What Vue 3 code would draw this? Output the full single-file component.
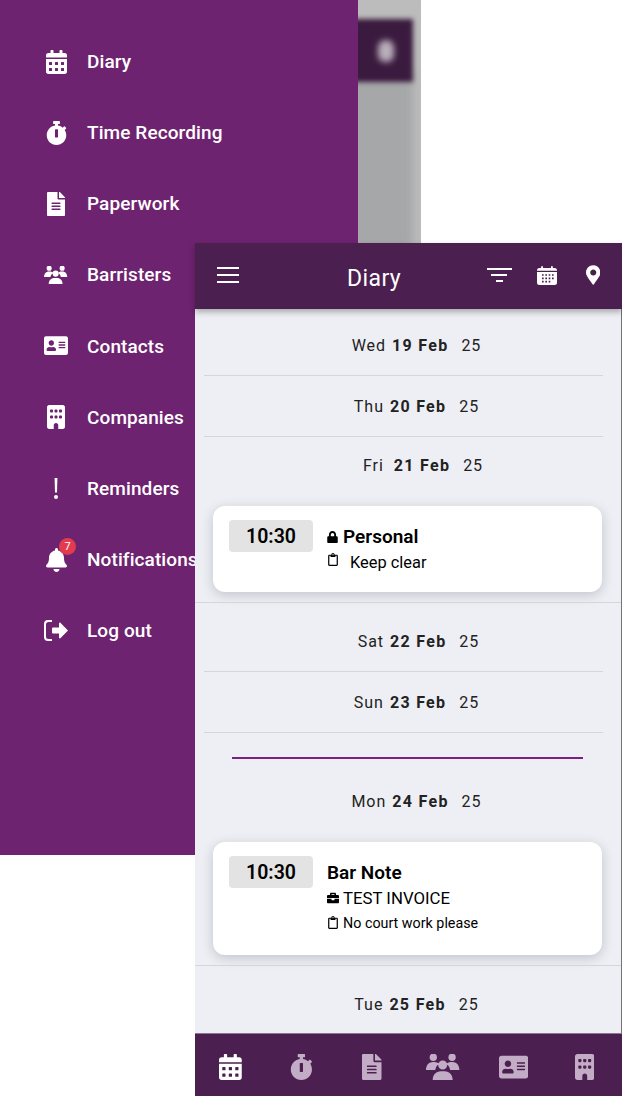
<template>
  <div class="page">
    <!-- back screen, menu open -->
    <div class="back">
      <div class="blur-shot">
        <div class="blur-list"></div>
        <div class="blur-bar"><span class="blur-pin"></span></div>
      </div>
      <nav class="menu">
        <div v-for="item in menu" :key="item.label" class="menu-row">
          <span class="menu-icon">
            <svg :class="'ico-' + item.icon" :viewBox="icons[item.icon].box"><path :d="icons[item.icon].d" /></svg>
            <span v-if="item.badge" class="badge">{{ item.badge }}</span>
          </span>
          <span class="menu-label">{{ item.label }}</span>
        </div>
      </nav>
    </div>

    <!-- front screen -->
    <div class="front">
      <header class="bar">
        <div class="burger"><span></span><span></span><span></span></div>
        <div class="title">Diary</div>
        <div class="actions">
          <div class="filter"><span></span><span></span><span></span></div>
          <svg class="cal-small" viewBox="0 0 24 24">
            <path d="M5 1.500h2.200v2H16.800v-2H19v2h2a3 3 0 0 1 3 3V7H0v-.5a3 3 0 0 1 3-3h2zM0 8.500h24V21a3 3 0 0 1-3 3H3a3 3 0 0 1-3-3zM6 11v2h2v-2zm4 0v2h2v-2zm4 0v2h2v-2zm4 0v2h2v-2zM6 15v2h2v-2zm4 0v2h2v-2zm4 0v2h2v-2zm4 0v2h2v-2zM6 19v2h2v-2zm4 0v2h2v-2zm4 0v2h2v-2z" fill-rule="evenodd" />
          </svg>
          <svg class="pin" :viewBox="icons.marker.box"><path :d="icons.marker.d" /></svg>
        </div>
      </header>

      <main class="list">
        <template v-for="day in days" :key="day.name">
          <div v-if="day.today" class="today"></div>
          <div class="day" :class="[day.shift, { tight: day.entry, after: day.after }]">
            <span>{{ day.name }}&nbsp;</span>
            <b>{{ day.date }}</b>
            <span class="year">&nbsp;&nbsp; 25</span>
          </div>
          <div v-if="day.entry" class="entry">
            <div class="time">{{ day.entry.time }}</div>
            <div class="info">
              <div class="heading">
                <svg v-if="day.entry.private" class="lock" :viewBox="icons.lock.box"><path :d="icons.lock.d" /></svg>
                {{ day.entry.title }}
              </div>
              <div v-if="day.entry.matter" class="matter">
                <svg class="case" :viewBox="icons.briefcase.box"><path :d="icons.briefcase.d" /></svg>
                {{ day.entry.matter }}
              </div>
              <div class="note" :class="{ big: day.entry.private }">
                <svg class="clip" :viewBox="icons.clipboard.box"><path :d="icons.clipboard.d" /></svg>
                <span>{{ day.entry.note }}</span>
              </div>
            </div>
          </div>
          <div v-if="day.entry" class="rule full"></div>
          <div v-else-if="day.rule" class="rule"></div>
        </template>
      </main>

      <footer class="tabs">
        <div v-for="(tab, i) in tabs" :key="tab" class="tab" :class="{ active: i === 0 }">
          <svg :viewBox="icons[tab].box"><path :d="icons[tab].d" /></svg>
        </div>
      </footer>
    </div>
  </div>
</template>

<script setup>
const icons = {
  calendar: { box: '0 0 448 512', d: 'M0 464c0 26.500 21.500 48 48 48h352c26.500 0 48-21.500 48-48V192H0v272zm320-196c0-6.600 5.400-12 12-12h40c6.600 0 12 5.400 12 12v40c0 6.600-5.400 12-12 12h-40c-6.600 0-12-5.400-12-12v-40zm0 128c0-6.600 5.400-12 12-12h40c6.600 0 12 5.400 12 12v40c0 6.600-5.400 12-12 12h-40c-6.600 0-12-5.400-12-12v-40zM192 268c0-6.600 5.400-12 12-12h40c6.600 0 12 5.400 12 12v40c0 6.600-5.400 12-12 12h-40c-6.600 0-12-5.400-12-12v-40zm0 128c0-6.600 5.400-12 12-12h40c6.600 0 12 5.400 12 12v40c0 6.600-5.400 12-12 12h-40c-6.600 0-12-5.400-12-12v-40zM64 268c0-6.600 5.400-12 12-12h40c6.600 0 12 5.400 12 12v40c0 6.600-5.400 12-12 12H76c-6.600 0-12-5.400-12-12v-40zm0 128c0-6.600 5.400-12 12-12h40c6.600 0 12 5.400 12 12v40c0 6.600-5.400 12-12 12H76c-6.600 0-12-5.400-12-12v-40zM400 64h-48V16c0-8.800-7.200-16-16-16h-32c-8.800 0-16 7.200-16 16v48H160V16c0-8.800-7.200-16-16-16h-32c-8.800 0-16 7.200-16 16v48H48C21.500 64 0 85.500 0 112v48h448v-48c0-26.500-21.500-48-48-48z' },
  stopwatch: { box: '0 0 448 512', d: 'M432 304c0 114.900-93.100 208-208 208S16 418.900 16 304c0-104 76.300-190.200 176-205.500V64h-28c-6.600 0-12-5.400-12-12V12c0-6.600 5.400-12 12-12h120c6.600 0 12 5.400 12 12v40c0 6.600-5.400 12-12 12h-28v34.500c37.500 5.800 71.700 21.600 99.700 44.600l27.500-27.500c4.700-4.700 12.300-4.700 17 0l28.300 28.300c4.700 4.700 4.700 12.300 0 17l-29.400 29.400-.6.6C419.700 223.300 432 262.200 432 304zm-176 36V188.500c0-6.600-5.400-12-12-12h-40c-6.600 0-12 5.400-12 12V340c0 6.600 5.400 12 12 12h40c6.600 0 12-5.400 12-12z' },
  file: { box: '0 0 384 512', d: 'M224 136V0H24C10.700 0 0 10.700 0 24v464c0 13.300 10.700 24 24 24h336c13.300 0 24-10.700 24-24V160H248c-13.200 0-24-10.800-24-24zm64 236c0 6.600-5.400 12-12 12H108c-6.600 0-12-5.400-12-12v-8c0-6.600 5.400-12 12-12h168c6.600 0 12 5.400 12 12v8zm0-64c0 6.600-5.400 12-12 12H108c-6.600 0-12-5.400-12-12v-8c0-6.600 5.400-12 12-12h168c6.600 0 12 5.400 12 12v8zm0-72v8c0 6.600-5.400 12-12 12H108c-6.600 0-12-5.400-12-12v-8c0-6.600 5.400-12 12-12h168c6.600 0 12 5.400 12 12zm96-114.100v6.100H256V0h6.100c6.400 0 12.500 2.500 17 7l97.900 98c4.500 4.500 7 10.600 7 16.900z' },
  users: { box: '0 0 33.400 26', d: 'M7.300-.4a3.700 3.700 0 1 1 0 7.400 3.700 3.700 0 0 1 0-7.400zM26.100-.4a3.700 3.700 0 1 1 0 7.400 3.700 3.700 0 0 1 0-7.400zM16.700 6.500a4.500 4.500 0 1 1 0 9 4.500 4.500 0 0 1 0-9zM0 16C0 11 3 8 7 8h1.500c2 0 3.500.8 4.500 2-2 1-3.500 3.500-3.700 6zM33.400 16c0-5-3-8-7-8h-1.500c-2 0-3.500.8-4.500 2 2 1 3.500 3.500 3.700 6zM6.700 26c0-5 3.300-8.700 8-8.700h4c4.700 0 8 3.700 8 8.700z' },
  card: { box: '0 0 576 512', d: 'M528 32H48C21.500 32 0 53.500 0 80v352c0 26.500 21.500 48 48 48h480c26.500 0 48-21.500 48-48V80c0-26.500-21.500-48-48-48zm-352 96c35.300 0 64 28.700 64 64s-28.700 64-64 64-64-28.700-64-64 28.700-64 64-64zm112 236.800c0 10.600-10 19.200-22.400 19.200H86.400C74 384 64 375.400 64 364.800v-19.200c0-31.800 30.100-57.600 67.200-57.600h5c12.300 5.100 25.700 8 39.800 8s27.600-2.900 39.800-8h5c37.100 0 67.200 25.800 67.200 57.600v19.200zM512 312c0 4.400-3.600 8-8 8H360c-4.400 0-8-3.600-8-8v-16c0-4.400 3.600-8 8-8h144c4.400 0 8 3.600 8 8v16zm0-64c0 4.400-3.600 8-8 8H360c-4.400 0-8-3.600-8-8v-16c0-4.400 3.600-8 8-8h144c4.400 0 8 3.600 8 8v16zm0-64c0 4.400-3.600 8-8 8H360c-4.400 0-8-3.600-8-8v-16c0-4.400 3.600-8 8-8h144c4.400 0 8 3.600 8 8v16z' },
  building: { box: '0 0 384 512', d: 'M48 0C21.500 0 0 21.500 0 48V464c0 26.500 21.500 48 48 48h96V432c0-26.500 21.500-48 48-48s48 21.500 48 48v80h96c26.500 0 48-21.500 48-48V48c0-26.500-21.500-48-48-48H48zM64 240c0-8.800 7.200-16 16-16h32c8.800 0 16 7.200 16 16v32c0 8.800-7.200 16-16 16H80c-8.800 0-16-7.200-16-16V240zm112-16h32c8.800 0 16 7.200 16 16v32c0 8.800-7.200 16-16 16H176c-8.800 0-16-7.200-16-16V240c0-8.800 7.200-16 16-16zm80 16c0-8.800 7.200-16 16-16h32c8.800 0 16 7.200 16 16v32c0 8.800-7.200 16-16 16H272c-8.800 0-16-7.200-16-16V240zM80 96h32c8.800 0 16 7.200 16 16v32c0 8.800-7.200 16-16 16H80c-8.800 0-16-7.200-16-16V112c0-8.800 7.200-16 16-16zm80 16c0-8.800 7.200-16 16-16h32c8.800 0 16 7.200 16 16v32c0 8.800-7.200 16-16 16H176c-8.800 0-16-7.200-16-16V112zM272 96h32c8.800 0 16 7.200 16 16v32c0 8.800-7.200 16-16 16H272c-8.800 0-16-7.200-16-16V112c0-8.800 7.200-16 16-16z' },
  exclamation: { box: '0 0 4 21', d: 'M.6 0h2.800L3 14.500H1zM2 17a2 2 0 1 1 0 4 2 2 0 0 1 0-4z' },
  bell: { box: '0 0 448 512', d: 'M224 512c35.320 0 63.970-28.650 63.970-64H160.030c0 35.350 28.650 64 63.970 64zm215.390-149.710c-19.320-20.760-55.470-51.990-55.470-154.290 0-77.700-54.480-139.900-127.940-155.160V32c0-17.670-14.320-32-31.980-32s-31.980 14.330-31.980 32v20.840C118.560 68.100 64.080 130.300 64.080 208c0 102.300-36.150 133.530-55.470 154.290-6 6.450-8.660 14.160-8.610 21.710.11 16.400 12.980 32 32.100 32h383.800c19.120 0 32-15.600 32.100-32 .05-7.550-2.610-15.270-8.610-21.710z' },
  logout: { box: '0 0 24 21', d: 'M8 0H4a4 4 0 0 0-4 4v13a4 4 0 0 0 4 4h4v-2H4.500A2.500 2.500 0 0 1 2 16.500V4.500A2.500 2.500 0 0 1 4.500 2H8zM9 7.500h6v-4c0-.8 1-1.200 1.600-.6L24 10.500l-7.400 7.600c-.6.6-1.600.2-1.600-.6v-4H9a1 1 0 0 1-1-1v-4a1 1 0 0 1 1-1z' },
  marker: { box: '0 0 384 512', d: 'M172.268 501.670C26.970 291.031 0 262.454 0 192 0 85.961 85.961 0 192 0s192 85.961 192 192c0 70.454-26.970 99.031-172.268 309.670-9.535 13.774-29.930 13.773-39.464 0zM192 272c44.183 0 80-35.817 80-80s-35.817-80-80-80-80 35.817-80 80 35.817 80 80 80z' },
  lock: { box: '0 0 448 512', d: 'M400 224h-24v-72C376 68.200 307.800 0 224 0S72 68.200 72 152v72H48c-26.500 0-48 21.500-48 48v192c0 26.500 21.500 48 48 48h352c26.500 0 48-21.500 48-48V272c0-26.500-21.500-48-48-48zm-104 0H152v-72c0-39.700 32.300-72 72-72s72 32.300 72 72v72z' },
  briefcase: { box: '0 0 512 512', d: 'M320 336c0 8.840-7.160 16-16 16h-96c-8.840 0-16-7.160-16-16v-48H0v144c0 25.600 22.400 48 48 48h416c25.600 0 48-22.400 48-48V288H320v48zm144-208h-80V80c0-25.600-22.400-48-48-48H176c-25.600 0-48 22.400-48 48v48H48c-25.600 0-48 22.400-48 48v80h512v-80c0-25.600-22.400-48-48-48zm-144 0H192V96h128v32z' },
  clipboard: { box: '0 0 384 512', d: 'M336 64h-80c0-35.300-28.700-64-64-64s-64 28.700-64 64H48C21.500 64 0 85.500 0 112v352c0 26.500 21.500 48 48 48h288c26.500 0 48-21.500 48-48V112c0-26.500-21.500-48-48-48zM192 40c13.300 0 24 10.700 24 24s-10.700 24-24 24-24-10.700-24-24 10.700-24 24-24zm144 418c0 3.300-2.700 6-6 6H54c-3.300 0-6-2.700-6-6V118c0-3.300 2.700-6 6-6h42v36c0 6.600 5.400 12 12 12h168c6.600 0 12-5.400 12-12v-36h42c3.300 0 6 2.700 6 6z' },
}

const menu = [
  { label: 'Diary', icon: 'calendar' },
  { label: 'Time Recording', icon: 'stopwatch' },
  { label: 'Paperwork', icon: 'file' },
  { label: 'Barristers', icon: 'users' },
  { label: 'Contacts', icon: 'card' },
  { label: 'Companies', icon: 'building' },
  { label: 'Reminders', icon: 'exclamation' },
  { label: 'Notifications', icon: 'bell', badge: 7 },
  { label: 'Log out', icon: 'logout' },
]

const days = [
  { name: 'Wed', date: '19 Feb', rule: true },
  { name: 'Thu', date: '20 Feb', rule: true },
  { name: 'Fri', date: '21 Feb', shift: 'fri', entry: { time: '10:30', title: 'Personal', private: true, note: 'Keep clear' } },
  { name: 'Sat', date: '22 Feb', shift: 'sat', rule: true, after: true },
  { name: 'Sun', date: '23 Feb', rule: true },
  { name: 'Mon', date: '24 Feb', today: true, entry: { time: '10:30', title: 'Bar Note', matter: 'TEST INVOICE', note: 'No court work please' } },
  { name: 'Tue', date: '25 Feb', after: true },
]

const tabs = ['calendar', 'stopwatch', 'file', 'users', 'card', 'building']
</script>

<style>
html, body {
  margin: 0;
  background: #fff;
}
</style>

<style scoped>
.page {
  position: relative;
  width: 622px;
  height: 1096px;
  overflow: hidden;
  background: #fff;
  font-family: Roboto, "Liberation Sans", sans-serif;
}

svg {
  display: block;
  fill: currentColor;
}

.back {
  position: absolute;
  left: 0;
  top: 0;
  width: 421px;
  height: 855px;
}

.blur-shot {
  position: absolute;
  left: 0;
  top: 0;
  width: 421px;
  height: 300px;
  overflow: hidden;
  background: #bcbcbc;
}

.blur-list {
  position: absolute;
  left: 300px;
  top: 70px;
  width: 113px;
  height: 240px;
  background: #a6a7a9;
  filter: blur(4px);
}

.blur-bar {
  position: absolute;
  left: 300px;
  top: 19px;
  width: 113px;
  height: 63px;
  display: flex;
  align-items: center;
  justify-content: flex-end;
  background: #3a1a3e;
  filter: blur(2.500px);
}

.blur-pin {
  width: 16px;
  height: 22px;
  margin-right: 19px;
  border-radius: 8px 8px 7px 7px;
  background: #bbb0bc;
  filter: blur(2px);
}

.menu {
  position: absolute;
  left: 0;
  top: 0;
  width: 358px;
  height: 855px;
  padding-top: 26px;
  box-sizing: border-box;
  background: #6e2370;
  color: #fff;
}

.menu-row {
  display: flex;
  align-items: center;
  height: 71.150px;
}

.menu-icon {
  position: relative;
  display: flex;
  justify-content: center;
  width: 24px;
  margin-left: 44px;
  margin-right: 19px;
}

.menu-icon svg {
  height: 24px;
}

.menu-icon svg.ico-users {
  height: 18px;
  width: 23.300px;
}

.menu-icon svg.ico-card {
  height: 21.300px;
}

.menu-icon svg.ico-exclamation {
  height: 21px;
  width: 4px;
}

.menu-icon svg.ico-logout {
  height: 21px;
  width: 24px;
}

.menu-label {
  font-size: 19px;
  font-weight: 500;
  letter-spacing: 0.1px;
  white-space: nowrap;
}

.badge {
  position: absolute;
  left: 15px;
  top: -10px;
  width: 17px;
  height: 17px;
  border-radius: 50%;
  background: #e23a4e;
  font-size: 11px;
  line-height: 17px;
  text-align: center;
}

.front {
  position: absolute;
  left: 195px;
  top: 243px;
  width: 427px;
  height: 853px;
  display: flex;
  flex-direction: column;
  background: #eeeff4;
}

.bar {
  position: relative;
  z-index: 1;
  display: flex;
  align-items: center;
  height: 66px;
  flex: none;
  box-sizing: border-box;
  padding: 0 22px 0 22px;
  background: #4b1f4f;
  color: #fff;
  box-shadow: 0 3px 6px rgba(0, 0, 0, 0.3);
}

.burger {
  display: flex;
  flex-direction: column;
  gap: 5px;
  width: 22px;
  margin-top: -2px;
}

.burger span {
  height: 2px;
  background: #fff;
}

.title {
  margin-left: 108px;
  margin-top: 4px;
  font-size: 23px;
  font-weight: 450;
  letter-spacing: 0.4px;
  flex: 1;
}

.actions {
  display: flex;
  align-items: center;
  margin-top: -2px;
}

.filter {
  display: flex;
  flex-direction: column;
  align-items: center;
  gap: 4px;
  width: 25px;
}

.filter span {
  height: 2px;
  width: 25px;
  background: #fff;
}

.filter span:nth-child(2) {
  width: 16px;
}

.filter span:nth-child(3) {
  width: 7px;
}

.cal-small {
  width: 20px;
  height: 20px;
  margin-left: 25px;
}

.pin {
  width: 14.500px;
  height: 20px;
  margin-left: 29px;
}

.list {
  flex: 1;
  min-height: 0;
  overflow: hidden;
  padding-top: 6px;
  border-right: 1px solid #77737a;
  box-sizing: border-box;
}

.day {
  display: flex;
  align-items: center;
  justify-content: center;
  height: 60px;
  padding-left: 17px;
  font-size: 16px;
  letter-spacing: 1px;
  color: #222;
  white-space: pre;
}

.day b {
  margin-left: 1px;
  font-weight: 700;
  letter-spacing: 1.300px;
}

.year {
  margin-left: -2px;
}

.day.fri {
  padding-left: 30px;
}

.day.fri b {
  margin-left: 5px;
}

.day.sat {
  padding-left: 21px;
}

.day.tight {
  height: 57px;
}

.day.after {
  margin-top: 8px;
}

.rule {
  height: 1px;
  margin: 0 18px 0 9px;
  background: #d6d6da;
}

.rule.full {
  margin: 0;
}

.today {
  height: 2px;
  margin: 24px 38px 14px 37px;
  background: #7b2080;
}

.entry {
  display: flex;
  align-items: flex-start;
  margin: 12px 19px 10px 18px;
  padding: 14px 16px 18px;
  border-radius: 12px;
  background: #fff;
  color: #000;
  box-shadow: 0 3px 12px rgba(60, 60, 80, 0.24);
}

.time {
  flex: none;
  width: 84px;
  height: 32px;
  margin-right: 14px;
  border-radius: 4px;
  background: #e3e3e3;
  font-size: 19.500px;
  font-weight: 600;
  line-height: 33px;
  text-align: center;
}

.heading {
  display: flex;
  align-items: center;
  gap: 5px;
  height: 32px;
  font-size: 19px;
  font-weight: 600;
}

.lock {
  width: 11px;
  height: 12px;
  margin-top: 2px;
}

.matter {
  display: flex;
  align-items: center;
  gap: 4px;
  height: 20px;
  font-size: 16.800px;
}

.case {
  width: 12px;
  height: 12px;
}

.note {
  display: flex;
  align-items: center;
  gap: 5px;
  height: 29px;
  font-size: 14.300px;
}

.note.big {
  align-items: flex-start;
  gap: 12px;
  height: 22px;
  font-size: 16.400px;
}

.clip {
  width: 10px;
  height: 13px;
  margin-left: 1px;
}

.note.big .clip {
  margin-top: 1px;
}

.note.big span {
  margin-top: 1px;
}

.tabs {
  display: flex;
  flex: none;
  height: 63px;
  padding-right: 2px;
  background: #4b1f4f;
  color: #c3adc6;
  border-top: 1px solid #8d7690;
  box-sizing: border-box;
}

.tab {
  flex: 1;
  display: flex;
  align-items: center;
  justify-content: center;
}

.tab svg {
  height: 26px;
  margin-top: 4px;
}

.tab.active {
  color: #fff;
}
</style>
